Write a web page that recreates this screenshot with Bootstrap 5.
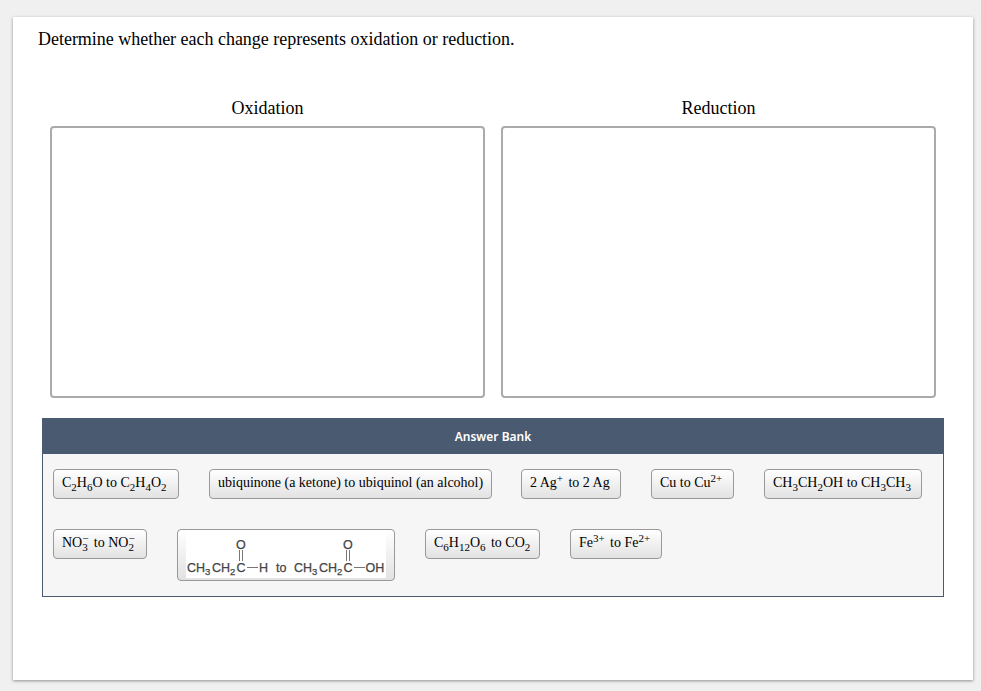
<!DOCTYPE html>
<html lang="en">
<head>
<meta charset="utf-8">
<meta name="viewport" content="width=device-width, initial-scale=1">
<title>Oxidation or reduction</title>
<link href="https://cdn.jsdelivr.net/npm/bootstrap@5.3.0/dist/css/bootstrap.min.css" rel="stylesheet">
<style>
body{background:#f0f0f0;font-family:"Liberation Serif","Times New Roman",serif;color:#000;padding:17px 8px 0 13px;height:691px;overflow:hidden}
.sheet{height:663px;background:#fff;box-shadow:0 1px 3px rgba(0,0,0,.4);padding:10px 29px 0}
.prompt{font-size:18px;line-height:24px;margin:0 0 0 -4px;letter-spacing:-.02px}
.bins{margin-top:45px;padding:0 8px;gap:16px}
.bin-title{font-size:18px;line-height:24px;margin-bottom:6px}
.bin{height:272px;border:2px solid #aaa;border-radius:4px}
.bank{margin-top:20px;height:179px;border:1px solid #4a5a70;background:#f6f6f6}
.bank-head{height:35px;background:#4a5a70;color:#fff;font:600 12px/35px "Noto Sans",sans-serif}
.bank-row{padding:15px 0 0 10px;height:60px;gap:30px}
.chip{height:30px;border:1px solid #999;border-radius:4px;background:linear-gradient(#fff,#e2e2e2);padding:0 0 0 8px;font-size:14px;line-height:25px;white-space:pre;flex:none;color:#000}
.chip sub,.chip sup{font-size:11px;line-height:0;position:static;vertical-align:baseline;display:inline-block}
.chip sub{transform:translateY(4px)}
.chip sup{transform:translateY(-5px)}
.pair{display:inline-grid;line-height:0;vertical-align:baseline}
.pair>*{grid-area:1/1}
.after{margin-left:1.9px}
.w1{width:126px}.w2{width:283px;margin-right:-1px}.w3{width:100px}.w4{width:83px}.w5{width:158px}
.w6{width:94px}.w7{width:218px;height:52px}.w8{width:115px}.w9{width:92px}
.mol{display:block;background:#fff}
</style>
<script src="https://cdn.jsdelivr.net/npm/bootstrap@5.3.0/dist/js/bootstrap.bundle.min.js"></script>
</head>
<body>
<main class="sheet">
<p class="prompt">Determine whether each change represents oxidation or reduction.</p>
<div class="bins d-flex">
<section class="flex-fill w-50"><div class="bin-title text-center">Oxidation</div><div class="bin"></div></section>
<section class="flex-fill w-50"><div class="bin-title text-center">Reduction</div><div class="bin"></div></section>
</div>
<section class="bank">
<div class="bank-head text-center">Answer Bank</div>
<div class="bank-row d-flex align-items-start">
<div class="chip w1">C<sub>2</sub>H<sub>6</sub>O to C<sub>2</sub>H<sub>4</sub>O<sub>2</sub></div>
<div class="chip w2">ubiquinone (a ketone) to ubiquinol (an alcohol)</div>
<div class="chip w3">2 Ag<sup>+</sup><span class="after"> to 2 Ag</span></div>
<div class="chip w4">Cu to Cu<sup>2+</sup></div>
<div class="chip w5">CH<sub>3</sub>CH<sub>2</sub>OH to CH<sub>3</sub>CH<sub>3</sub></div>
</div>
<div class="bank-row d-flex align-items-start">
<div class="chip w6">NO<span class="pair"><sup>−</sup><sub>3</sub></span><span class="after"> to NO</span><span class="pair"><sup>−</sup><sub>2</sub></span></div>
<div class="chip w7"><svg class="mol" width="200" height="48" viewBox="0 0 200 48" font-family="Liberation Sans, Arial, sans-serif" font-size="12.5" fill="#444" stroke="#444" stroke-width=".25">
<g id="acyl"><text x="1" y="42" textLength="18">CH</text><text x="19" y="45" font-size="9.5">3</text><text x="26" y="42" textLength="18">CH</text><text x="44" y="45" font-size="9.500">2</text><text x="50.500" y="42">C</text><text x="50" y="18.500">O</text><path d="M53.500 20v11M56.500 20v11M61 37.500h11" stroke="#777" stroke-width="1"/></g>
<text x="73" y="42">H</text><text x="90" y="42">to</text>
<use href="#acyl" x="107"/><text x="179.500" y="42">OH</text>
</svg></div>
<div class="chip w8">C<sub>6</sub>H<sub>12</sub>O<sub>6</sub><span class="after"> to CO</span><sub>2</sub></div>
<div class="chip w9">Fe<sup>3+</sup><span class="after"> to Fe</span><sup>2+</sup></div>
</div>
</section>
</main>
</body>
</html>
